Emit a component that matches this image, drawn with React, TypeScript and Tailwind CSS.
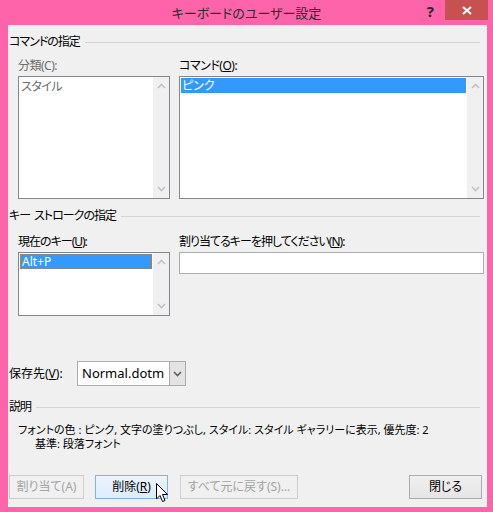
import React from 'react';

const font = "font-['Noto_Sans','Noto_Sans_CJK_JP',sans-serif] [font-feature-settings:'palt']";

const SectionHeader: React.FC<{ title: React.ReactNode }> = ({ title }) => (
  <div className="flex items-center h-[16px] pl-[1px] pr-[4px]">
    <span className="text-[12px] leading-[16px] tracking-[-1px] text-black whitespace-nowrap">{title}</span>
    <div className="flex-1 h-px bg-[#d5d5d5] ml-[5px] mt-[1px]" />
  </div>
);

const Chevron: React.FC<{ down?: boolean; color?: string }> = ({ down, color = '#c2c2c2' }) => (
  <svg width="9" height="6" viewBox="0 0 9 6">
    <path
      d={down ? 'M1 1 L4.5 4.5 L8 1' : 'M1 5 L4.5 1.5 L8 5'}
      fill="none"
      stroke={color}
      strokeWidth="1.6"
    />
  </svg>
);

const ScrollBar: React.FC = () => (
  <div className="w-[16px] bg-[#f0f0f0] flex flex-col justify-between items-center py-[6px]">
    <Chevron />
    <Chevron down />
  </div>
);

const Button: React.FC<{ label: React.ReactNode; w: string; state?: 'disabled' | 'hover' | 'normal' }> = ({
  label,
  w,
  state = 'normal',
}) => {
  const cls =
    state === 'disabled'
      ? 'border-[#cdcdcd] bg-[#f0f0f0] text-[#a3a3a3]'
      : state === 'hover'
      ? 'border-[#7eb4ea] bg-gradient-to-b from-[#ecf4fc] to-[#dcecfc] text-black'
      : 'border-[#acacac] bg-gradient-to-b from-[#f0f0f0] to-[#e5e5e5] text-black';
  return (
    <div className={`${w} h-[24px] border flex items-center justify-center text-[12px] ${cls}`}>{label}</div>
  );
};

export default function App() {
  return (
    <div className={`w-[493px] h-[512px] bg-[#fe64aa] flex flex-col relative ${font}`}>
      {/* Title bar */}
      <div className="h-[25px] relative flex items-center justify-center shrink-0">
        <span className="text-[13px] text-[#2b2b2b] leading-none mt-[2px]">キーボードのユーザー設定</span>
        <div className="absolute right-[5px] top-0 flex items-start">
          <span className="text-[15px] font-bold text-[#262626] mr-[11px] mt-[2px] leading-[18px]">?</span>
          <div className="w-[43px] h-[20px] bg-[#c75050] flex items-center justify-center">
            <svg width="10" height="9" viewBox="0 0 10 9">
              <path d="M1 1 L9 8 M9 1 L1 8" stroke="#ffffff" strokeWidth="2" />
            </svg>
          </div>
        </div>
      </div>

      {/* Client area */}
      <div className="flex-1 ml-[8px] mr-[6px] mb-[5px] bg-[#f0f0f0] flex flex-col pr-[3px] text-black">
        <div className="mt-[9px]">
          <SectionHeader title="コマンドの指定" />
        </div>

        <div className="flex mt-[8px] pl-[10px] gap-[9px]">
          <div className="w-[152px] flex flex-col">
            <div className="h-[16px] text-[12px] leading-[16px] tracking-[-0.5px] text-[#6d6d6d]">分類(C):</div>
            <div className="mt-[2px] h-[123px] border border-[#828790] bg-white flex">
              <div className="flex-1 px-[2px] text-[12px] leading-[15px] tracking-[-0.5px] text-[#6d6d6d] pt-[2px]">スタイル</div>
              <ScrollBar />
            </div>
          </div>
          <div className="w-[305px] flex flex-col">
            <div className="h-[16px] text-[12px] leading-[16px] tracking-[-0.5px]">
              コマンド(<span className="underline">O</span>):
            </div>
            <div className="mt-[2px] h-[123px] border border-[#828790] bg-white flex">
              <div className="flex-1 p-[1px]">
                <div className="h-[15px] bg-[#3399ff] text-white text-[12px] leading-[15px] pl-[1px]">ピンク</div>
              </div>
              <ScrollBar />
            </div>
          </div>
        </div>

        <div className="mt-[9px]">
          <SectionHeader
            title={
              <>
                キー<span className="inline-block w-[4px]" />ストロークの指定
              </>
            }
          />
        </div>

        <div className="flex mt-[10px] pl-[10px] gap-[9px]">
          <div className="w-[152px] flex flex-col">
            <div className="h-[16px] text-[12px] leading-[16px] tracking-[-1px]">
              現在のキー(<span className="underline">U</span>):
            </div>
            <div className="mt-[2px] h-[64px] border border-[#828790] bg-white flex">
              <div className="flex-1 p-[1px]">
                <div className="h-[15px] bg-[#3399ff] border border-dotted border-[#c87a2a] text-white text-[12px] leading-[13px] pl-[1px]">
                  Alt+P
                </div>
              </div>
              <ScrollBar />
            </div>
          </div>
          <div className="w-[305px] flex flex-col">
            <div className="h-[16px] text-[12px] leading-[16px] tracking-[-1px]">
              割り当てるキーを押してください(<span className="underline">N</span>):
            </div>
            <div className="mt-[2px] h-[22px] border border-[#abadb3] bg-white" />
          </div>
        </div>

        <div className="flex items-center mt-[45px] pl-[1px]">
          <span className="w-[68px] text-[12px]">
            保存先(<span className="underline">V</span>):
          </span>
          <div className="w-[109px] h-[25px] border border-[#acacac] bg-white flex">
            <div className="flex-1 pl-[4px] text-[13px] leading-[23px]">Normal.dotm</div>
            <div className="w-[16px] bg-[#e3e3e3] border-l border-[#acacac] flex items-center justify-center">
              <Chevron down color="#606060" />
            </div>
          </div>
        </div>

        <div className="mt-[13px]">
          <SectionHeader title="説明" />
        </div>

        <div className="mt-[8px] pl-[10px] text-[11px] leading-[14px]">
          <div>フォントの色 : ピンク, 文字の塗りつぶし, スタイル: スタイル ギャラリーに表示, 優先度: 2</div>
          <div className="pl-[17px]">基準: 段落フォント</div>
        </div>

        <div className="flex mt-[24px] pl-[1px]">
          <Button w="w-[75px]" label="割り当て(A)" state="disabled" />
          <div className="ml-[11px]">
            <Button
              w="w-[73px]"
              state="hover"
              label={
                <span>
                  削除(<span className="underline">R</span>)
                </span>
              }
            />
          </div>
          <div className="ml-[12px]">
            <Button w="w-[118px]" label="すべて元に戻す(S)..." state="disabled" />
          </div>
          <div className="ml-auto mr-[2px]">
            <Button w="w-[73px]" label="閉じる" />
          </div>
        </div>
      </div>

      {/* mouse pointer */}
      <svg className="absolute left-[156px] top-[483px]" width="13" height="20" viewBox="0 0 13 20">
        <path
          d="M0.5 0.5 L0.5 16 L4 12.5 L6.5 18.5 L9 17.5 L6.5 11.5 L11.5 11.5 Z"
          fill="#ffffff"
          stroke="#000000"
          strokeWidth="1"
          strokeLinejoin="round"
        />
      </svg>
    </div>
  );
}
